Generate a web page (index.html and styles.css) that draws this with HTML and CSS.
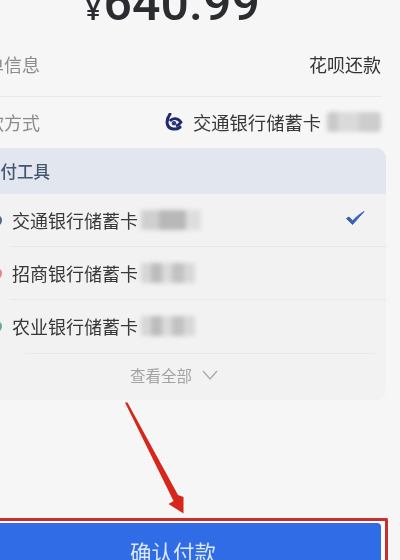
FILE: index.html
```html
<!DOCTYPE html>
<html lang="zh-CN">
<head>
<meta charset="utf-8">
<title>确认付款</title>
<link rel="stylesheet" href="styles.css">
</head>
<body>
<main class="page">
  <div class="sheet">
    <div class="amount"><span class="yen">¥</span>640.99</div>
    <div class="info info-first"><span class="label">订单信息</span><span class="value">花呗还款</span></div>
    <div class="info info-last">
      <span class="label">付款方式</span>
      <span class="method">
        <svg class="logo" viewBox="0 0 18 18" aria-hidden="true">
          <path d="M5 1C2.600 4.500 1.300 9 2.800 12.500C4.600 16.400 11 17.300 15 14.200" fill="none" stroke="#1d2a70" stroke-width="3" stroke-linecap="round"/>
          <path d="M4.800 8C8 4.400 13 4.800 16 9.300C14.800 11 13.200 12.300 11 13" fill="none" stroke="#1d2a70" stroke-width="2.800"/>
          <circle cx="9" cy="10.300" r="2.300" fill="#2a3a8c"/>
        </svg>
        <span>交通银行储蓄卡</span>
        <span class="mask mask-value"></span>
      </span>
    </div>
    <section class="panel">
      <h2 class="panel-title">支付工具</h2>
      <div class="bank">
        <span class="dot dot-blue"></span>
        <div class="bank-body">
          <span>交通银行储蓄卡</span><span class="mask mask-long"></span>
          <svg class="check" viewBox="0 0 20 16" aria-hidden="true"><path d="M1.500 8.500L7.500 14.500L19 1.500C13.500 5 10.500 7.800 7.600 10.800L4 7Z" fill="#3b64b8" stroke="#3b64b8" stroke-width="1" stroke-linejoin="round"/></svg>
        </div>
      </div>
      <div class="bank">
        <span class="dot dot-red"></span>
        <div class="bank-body"><span>招商银行储蓄卡</span><span class="mask mask-short"></span></div>
      </div>
      <div class="bank bank-end">
        <span class="dot dot-green"></span>
        <div class="bank-body"><span>农业银行储蓄卡</span><span class="mask mask-short"></span></div>
      </div>
      <div class="more">
        <span class="more-inner">查看全部
          <svg class="chevron" viewBox="0 0 16 10" aria-hidden="true"><path d="M1 1L8 9L15 1" fill="none" stroke="#a9a9a9" stroke-width="1.200"/></svg>
        </span>
      </div>
    </section>
    <div class="frame"><button class="pay" type="button">确认付款</button></div>
  </div>
  <svg class="arrow" viewBox="0 0 400 560" aria-hidden="true"><polygon points="125,402.500 127.500,402.500 178,495 183.500,497 183.500,513.500 168.500,504 173.500,501" fill="#d7261b"/></svg>
</main>
</body>
</html>
```
FILE: styles.css
```css
* { box-sizing: border-box; }
html, body { margin: 0; padding: 0; }
body { background: #f6f6f6; font-family: "Noto Sans CJK SC", "Noto Sans", sans-serif; }
.page { position: relative; width: 400px; height: 560px; overflow: hidden; background: #f6f6f6; }
.sheet { width: 416px; margin-left: -35px; filter: blur(0.55px); }
.amount { margin-top: -26px; height: 60px; line-height: 58px; text-align: center; font-family: Roboto, "Liberation Sans", sans-serif; font-size: 50px; font-weight: 500; color: #2b2c30; letter-spacing: 0.1px; }
.yen { font-size: 27px; margin-right: 3px; }
.info { display: flex; align-items: center; justify-content: space-between; margin-left: 3px; padding-bottom: 2px; font-size: 18px; line-height: 26px; }
.info-first { height: 63px; border-bottom: 1px solid #e9e9e9; }
.info-last { height: 51px; }
.label { color: #8b8b8b; }
.value { color: #333333; }
.method { display: flex; align-items: center; color: #383838; font-size: 18.300px; }
.logo { width: 18px; height: 18px; margin-right: 10px; }
.mask { display: block; height: 20px; filter: blur(2px); }
.mask-value { width: 54px; margin-left: 6px; border-radius: 4px; background: linear-gradient(90deg, #c9c9c9 0 20%, #dadada 20% 60%, #cdcdcd 60% 100%); }
.mask-long { width: 60px; margin-left: 3px; background: linear-gradient(90deg, #cfcfcf 0 30%, #b8b8b8 30% 75%, #dddddd 75% 100%); }
.mask-short { width: 54px; margin-left: 3px; background: linear-gradient(90deg, #d6d6d6 0 18%, #bdbdbd 18% 38%, #dadada 38% 58%, #c2c2c2 58% 80%, #d8d8d8 80% 100%); }
.panel { width: 416px; margin-left: 5px; border-radius: 10px; background: #f2f2f3; overflow: hidden; }
.panel-title { margin: 0; height: 46px; padding-left: 14px; display: flex; align-items: center; background: #e1e6ef; color: #46566e; font-size: 16.500px; font-weight: 500; }
.bank { display: flex; align-items: stretch; padding-left: 14px; font-size: 18px; color: #383838; }
.dot { width: 18px; height: 15px; border-radius: 50%; align-self: center; margin-right: 8px; flex: none; }
.dot-blue { background: #55677f; }
.dot-red { background: #e5867a; }
.dot-green { background: #65a98f; }
.bank-body { flex: 1; height: 53px; display: flex; align-items: center; padding: 0 21px 0 2px; border-bottom: 1px solid #e8e8e9; }
.bank-end .bank-body { border-bottom: none; padding-bottom: 2px; }
.check { width: 20px; height: 16px; margin-left: auto; margin-bottom: 4px; }
.more { height: 47px; margin: 0 11px 0 55px; border-top: 1px solid #e8e8e9; display: flex; justify-content: center; }
.more-inner { display: flex; align-items: center; height: 42px; color: #a3a3a3; font-size: 15.500px; margin-left: -52px; }
.chevron { width: 16px; height: 10px; margin-left: 10px; }
.frame { width: 423px; height: 60px; margin-top: 118px; padding: 2px 5px 0 0; border: 3px solid #c62f2b; border-left: none; border-radius: 2px; background: #fafafa; }
.pay { display: block; width: 416px; height: 60px; padding: 0 0 4px; border: none; border-radius: 4px; background: #2f6ce5; color: #dde8fb; font-family: inherit; font-size: 21.500px; }
.arrow { position: absolute; left: 0; top: 0; width: 400px; height: 560px; filter: blur(0.4px); }
```
